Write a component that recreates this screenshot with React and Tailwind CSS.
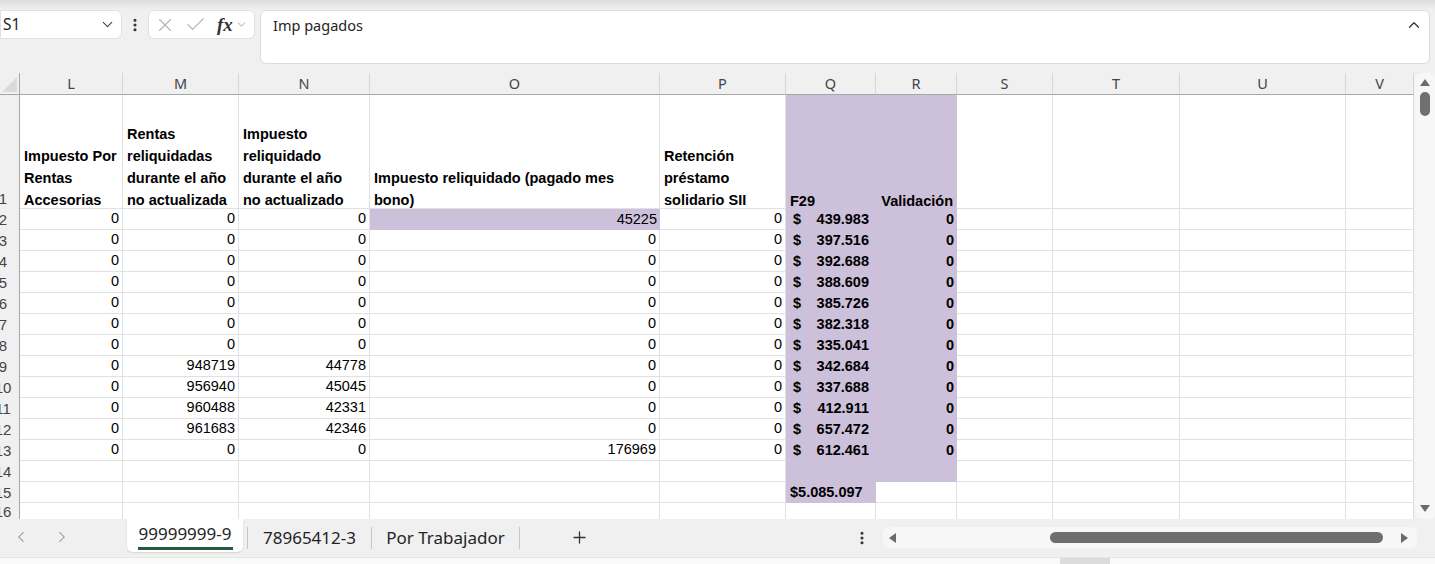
import React from 'react';
import { ChevronDown, ChevronUp, ChevronLeft, ChevronRight, X, Check, Plus, EllipsisVertical } from 'lucide-react';

const cols = ['L', 'M', 'N', 'O', 'P', 'Q', 'R', 'S', 'T', 'U', 'V'];

const rows = [
  { m: 0, n: 0, o: 45225, q: '439.983' },
  { m: 0, n: 0, o: 0, q: '397.516' },
  { m: 0, n: 0, o: 0, q: '392.688' },
  { m: 0, n: 0, o: 0, q: '388.609' },
  { m: 0, n: 0, o: 0, q: '385.726' },
  { m: 0, n: 0, o: 0, q: '382.318' },
  { m: 0, n: 0, o: 0, q: '335.041' },
  { m: 948719, n: 44778, o: 0, q: '342.684' },
  { m: 956940, n: 45045, o: 0, q: '337.688' },
  { m: 960488, n: 42331, o: 0, q: '412.911' },
  { m: 961683, n: 42346, o: 0, q: '657.472' },
  { m: 0, n: 0, o: 176969, q: '612.461' },
];

const gridCols = 'grid-cols-[20px_103px_116px_131px_290px_126px_90px_81px_96px_127px_166px_68px]';
const cell = 'border-r border-b border-[#e1e1e1] bg-white';
const purple = 'bg-[#ccc0da]';

const RowHead = ({ n, bottom }) => (
  <div className={`flex justify-end overflow-hidden border-r border-[#a6a6a6] bg-[#f0f0f0] text-[15px] text-[#444] ${bottom ? 'items-end pb-[3px]' : 'items-center'}`}>
    <span className="w-[32px] shrink-0 text-center leading-none">{n}</span>
  </div>
);

const Num = ({ v, bold, bg }) => (
  <div className={`${bg ? `${bg}` : cell} flex items-center justify-end pr-[3px] ${bold ? 'font-bold' : ''}`}>{v}</div>
);

const Empty = ({ bg }) => <div className={bg ? bg : cell} />;

const HeadCell = ({ lines, bg }) => (
  <div className={`${bg ? bg : cell} flex flex-col justify-end pl-[4px] font-bold leading-[22px]`}>
    {lines.map((l, i) => (
      <div key={i} className="whitespace-nowrap translate-y-[3px]">{l}</div>
    ))}
  </div>
);

const Tri = ({ dir }) => {
  const pts = {
    up: '0,8 5,1 10,8',
    down: '0,1 5,8 10,1',
    left: '8,0 1,5 8,10',
    right: '1,0 8,5 1,10',
  };
  return (
    <svg width="10" height="10" viewBox="0 0 10 10" className="shrink-0">
      <polygon points={pts[dir]} fill="#6b6b6b" />
    </svg>
  );
};

export default function App() {
  return (
    <div className="w-[1435px] h-[564px] overflow-hidden flex flex-col bg-[#f0f0f0] font-['Noto_Sans',sans-serif] text-[#242424]">
      <div className="h-[10px] shrink-0 bg-gradient-to-b from-[#dedede] to-[#f0f0f0]" />

      {/* formula bar */}
      <div className="h-[54px] shrink-0 flex items-start">
        <div className="w-[122px] h-[29px] shrink-0 bg-white border border-[#e0e0e0] rounded-r-md flex items-center justify-between pl-[2px] pr-[5px] text-[15.5px]">
          <span>S1</span>
          <ChevronDown className="w-[17px] h-[17px] text-[#424242]" strokeWidth={1.6} />
        </div>
        <div className="w-[26px] h-[29px] shrink-0 flex items-center justify-center">
          <EllipsisVertical className="w-[16px] h-[16px] text-[#333]" strokeWidth={2.6} />
        </div>
        <div className="w-[107px] h-[29px] shrink-0 bg-white border border-[#e0e0e0] rounded-md flex items-center pl-[5px] gap-[8px]">
          <X className="w-[22px] h-[22px] text-[#b4b4b4]" strokeWidth={1.2} />
          <Check className="w-[23px] h-[23px] text-[#b4b4b4]" strokeWidth={1.2} />
          <span className="font-['Liberation_Serif',serif] italic font-bold text-[19px] leading-none ml-[2px] text-[#333]">fx</span>
          <ChevronDown className="w-[13px] h-[13px] text-[#9a9a9a] -ml-[6px]" strokeWidth={1.6} />
        </div>
        <div className="ml-[5px] w-[1170px] h-[54px] shrink-0 bg-white border border-[#dcdcdc] rounded-md flex justify-between pl-[12px] pr-[6px] pt-[4px]">
          <span className="text-[14.5px]">Imp pagados</span>
          <ChevronUp className="w-[18px] h-[18px] text-[#333] mt-[1px]" strokeWidth={1.6} />
        </div>
      </div>

      <div className="h-[9px] shrink-0" />

      {/* sheet */}
      <div className="flex h-[446px] shrink-0">
        <div className={`w-[1414px] shrink-0 grid ${gridCols} grid-rows-[22px_114px_repeat(14,21px)_16px] font-['Liberation_Sans',sans-serif] text-[14.5px] text-black overflow-hidden`}>
          {/* column header */}
          <div className="border-b border-r border-[#a6a6a6] bg-[#f0f0f0] flex items-end pl-[2px] pb-[2px]">
            <svg width="15" height="15" viewBox="0 0 15 15">
              <polygon points="15,0 15,15 0,15" fill="#dadada" />
            </svg>
          </div>
          {cols.map((c) => (
            <div key={c} className="border-b border-[#a6a6a6] border-r-[#d6d6d6] border-r bg-[#f0f0f0] flex items-center justify-center font-['Noto_Sans',sans-serif] text-[14.5px] text-[#444]">
              {c}
            </div>
          ))}

          {/* row 1 */}
          <RowHead n={1} bottom />
          <HeadCell lines={['Impuesto Por', 'Rentas', 'Accesorias']} />
          <HeadCell lines={['Rentas', 'reliquidadas', 'durante el año', 'no actualizada']} />
          <HeadCell lines={['Impuesto', 'reliquidado', 'durante el año', 'no actualizado']} />
          <HeadCell lines={['Impuesto reliquidado (pagado mes', 'bono)']} />
          <HeadCell lines={['Retención', 'préstamo', 'solidario SII']} />
          <HeadCell lines={['F29']} bg={purple} />
          <div className={`${purple} flex items-end justify-end pr-[4px] font-bold leading-[22px]`}>
            <span className="translate-y-[3px]">Validación</span>
          </div>
          <Empty />
          <Empty />
          <Empty />
          <Empty />

          {rows.map((r, i) => (
            <React.Fragment key={i}>
              <RowHead n={i + 2} />
              <Num v={0} />
              <Num v={r.m} />
              <Num v={r.n} />
              <Num v={r.o} bg={i === 0 ? purple : null} />
              <Num v={0} />
              <div className={`${purple} flex items-center justify-between pl-[7px] pr-[7px] font-bold`}>
                <span>$</span>
                <span>{r.q}</span>
              </div>
              <Num v={0} bold bg={purple} />
              <Empty />
              <Empty />
              <Empty />
              <Empty />
            </React.Fragment>
          ))}

          {/* row 14 */}
          <RowHead n={14} />
          <Empty />
          <Empty />
          <Empty />
          <Empty />
          <Empty />
          <Empty bg={purple} />
          <Empty bg={purple} />
          <Empty />
          <Empty />
          <Empty />
          <Empty />

          {/* row 15 */}
          <RowHead n={15} />
          <Empty />
          <Empty />
          <Empty />
          <Empty />
          <Empty />
          <div className={`${purple} flex items-center pl-[4px] font-bold`}>$5.085.097</div>
          <Empty />
          <Empty />
          <Empty />
          <Empty />
          <Empty />

          {/* row 16 */}
          <RowHead n={16} />
          {cols.map((c) => (
            <div key={c} className="border-r border-[#e1e1e1] bg-white" />
          ))}
        </div>

        {/* vertical scrollbar */}
        <div className="w-[20px] shrink-0 bg-[#f7f7f7] rounded-md flex flex-col items-center justify-between py-[5px] ml-[1px]">
          <div className="flex flex-col items-center gap-[4px]">
            <Tri dir="up" />
            <div className="w-[10px] h-[24px] rounded-full bg-[#707070]" />
          </div>
          <Tri dir="down" />
        </div>
      </div>

      {/* sheet tabs */}
      <div className="h-[38px] shrink-0 flex items-start text-[17px] text-[#242424]">
        <div className="w-[127px] h-[35px] shrink-0 flex items-center">
          <ChevronLeft className="w-[18px] h-[18px] text-[#8a8a8a] ml-[12px]" strokeWidth={1.4} />
          <ChevronRight className="w-[18px] h-[18px] text-[#8a8a8a] ml-[23px]" strokeWidth={1.4} />
        </div>
        <div className="w-[116px] h-[33px] shrink-0 bg-white rounded-b-md shadow-[0_1px_2px_rgba(0,0,0,0.12)] flex flex-col items-center justify-end">
          <span className="leading-none mb-[5px]">99999999-9</span>
          <div className="w-[95px] h-[3px] bg-[#245b3e] mb-[2px]" />
        </div>
        <div className="w-[4px] shrink-0" />
        <div className="w-[1px] h-[22px] shrink-0 bg-[#c6c6c6] mt-[8px]" />
        <div className="w-[123px] h-[37px] shrink-0 flex items-center justify-center">78965412-3</div>
        <div className="w-[1px] h-[22px] shrink-0 bg-[#c6c6c6] mt-[8px]" />
        <div className="w-[147px] h-[37px] shrink-0 flex items-center justify-center">Por Trabajador</div>
        <div className="w-[1px] h-[22px] shrink-0 bg-[#c6c6c6] mt-[8px]" />
        <div className="w-[119px] h-[37px] shrink-0 flex items-center justify-center">
          <Plus className="w-[19px] h-[19px] text-[#333]" strokeWidth={1.6} />
        </div>
        <div className="w-[213px] shrink-0" />
        <div className="w-[20px] h-[37px] shrink-0 flex items-center justify-center">
          <EllipsisVertical className="w-[16px] h-[16px] text-[#333]" strokeWidth={2.6} />
        </div>
        <div className="ml-[11px] mt-[8px] w-[534px] h-[21px] shrink-0 bg-[#f7f7f7] rounded-md flex items-center pl-[5px] pr-[7px]">
          <Tri dir="left" />
          <div className="w-[152px] shrink-0" />
          <div className="w-[333px] h-[11px] shrink-0 rounded-full bg-[#6e6e6e]" />
          <div className="flex-1" />
          <Tri dir="right" />
        </div>
      </div>

      <div className="h-[7px] shrink-0 bg-[#f9f9f9] border-t border-[#e6e6e6] flex">
        <div className="ml-[1060px] w-[50px] h-full bg-[#dcdcdc]" />
      </div>
    </div>
  );
}
